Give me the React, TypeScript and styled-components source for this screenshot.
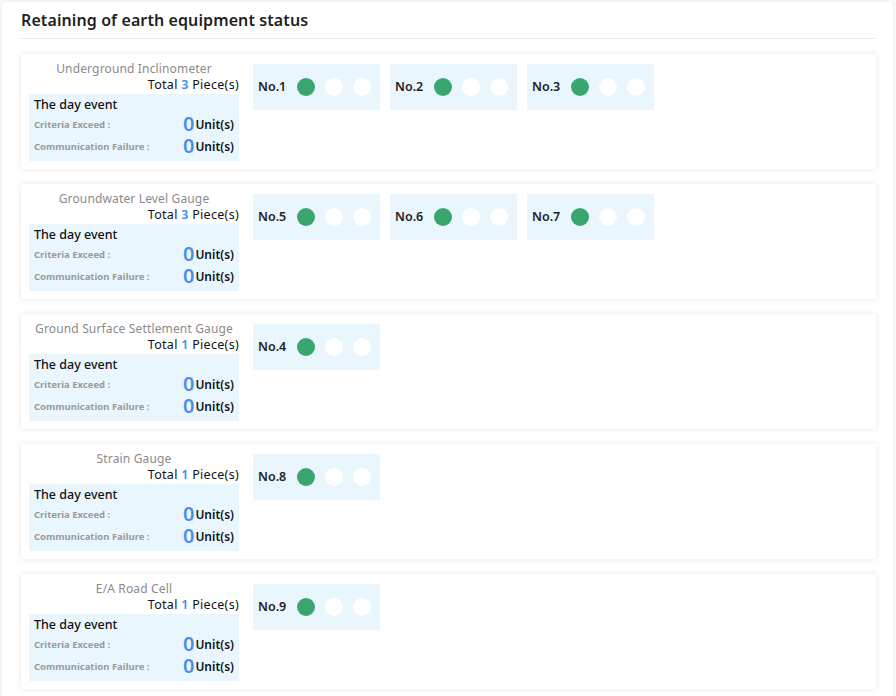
import React from 'react';
import styled, {createGlobalStyle} from 'styled-components';

type GroupType = {
    name: string
    total: number
    devices: number[]
}

const groups: GroupType[] = [
    {name: 'Underground Inclinometer', total: 3, devices: [1, 2, 3]},
    {name: 'Groundwater Level Gauge', total: 3, devices: [5, 6, 7]},
    {name: 'Ground Surface Settlement Gauge', total: 1, devices: [4]},
    {name: 'Strain Gauge', total: 1, devices: [8]},
    {name: 'E/A Road Cell', total: 1, devices: [9]},
]

const GlobalStyle = createGlobalStyle`
  body {
    margin: 0;
    background: #fafafa;
    font-family: "Noto Sans", "Open Sans", sans-serif;
    color: #222;
  }
`

export default function App() {
    return (
        <>
            <GlobalStyle/>
            <Panel>
                <Title>Retaining of earth equipment status</Title>
                <Cards>
                    {groups.map(g => <GroupCard key={g.name} group={g}/>)}
                </Cards>
            </Panel>
        </>
    )
}

const GroupCard = ({group}: { group: GroupType }) => {
    return (
        <Card>
            <Summary>
                <GroupName>{group.name}</GroupName>
                <Total>Total <Count>{group.total}</Count> Piece(s)</Total>
                <EventBox>
                    <EventTitle>The day event</EventTitle>
                    <EventRow>
                        <EventLabel>Criteria Exceed :</EventLabel>
                        <EventValue><Zero>0</Zero>Unit(s)</EventValue>
                    </EventRow>
                    <EventRow>
                        <EventLabel>Communication Failure :</EventLabel>
                        <EventValue><Zero>0</Zero>Unit(s)</EventValue>
                    </EventRow>
                </EventBox>
            </Summary>
            <Devices>
                {group.devices.map(n => (
                    <Device key={n}>
                        <DeviceName>No.{n}</DeviceName>
                        <Lamp on/>
                        <Lamp/>
                        <Lamp/>
                    </Device>
                ))}
            </Devices>
        </Card>
    )
}

//=========================PANEL===================================

const Panel = styled.div`
  margin: 2px 3px 0 2px;
  min-height: 720px;
  background: #fff;
  border-radius: 4px;
  box-shadow: 0 0 4px rgba(0, 0, 0, 0.08);
  padding: 8px 17px 20px 19px;
`

const Title = styled.div`
  font-size: 16px;
  font-weight: 600;
  letter-spacing: 0.1px;
  color: #1f1f1f;
  height: 28px;
  line-height: 20px;
  border-bottom: 1px solid #e8e8e8;
  margin-bottom: 15px;
`

const Cards = styled.div`
  display: flex;
  flex-direction: column;
  gap: 15px;
`

//=========================CARD====================================

const Card = styled.div`
  display: flex;
  align-items: flex-start;
  gap: 14px;
  height: 115px;
  box-sizing: border-box;
  padding: 6px 8px 8px 8px;
  background: #fff;
  box-shadow: 0 0 6px rgba(0, 0, 0, 0.1);
`

const Summary = styled.div`
  width: 210px;
  display: flex;
  flex-direction: column;
`

const GroupName = styled.div`
  text-align: center;
  color: #8a8a8a;
  font-size: 12px;
  letter-spacing: 0.15px;
  line-height: 17px;
`

const Total = styled.div`
  text-align: right;
  font-size: 12.5px;
  letter-spacing: 0.3px;
  line-height: 16px;
  color: #111;
  margin-bottom: 1px;
`

const Count = styled.span`
  color: #3a8ee6;
  font-weight: 600;
`

const EventBox = styled.div`
  background: #eaf6fe;
  padding: 2px 5px 2px 5px;
  height: 67px;
  box-sizing: border-box;
`

const EventTitle = styled.div`
  font-size: 12.5px;
  font-weight: 500;
  line-height: 17px;
  color: #111;
`

const EventRow = styled.div`
  display: flex;
  align-items: center;
  justify-content: space-between;
  height: 22px;
`

const EventLabel = styled.span`
  font-size: 9.5px;
  font-weight: 700;
  color: #9a9a9a;
`

const EventValue = styled.span`
  display: flex;
  align-items: center;
  gap: 1px;
  font-size: 12px;
  font-weight: 600;
  color: #111;
`

const Zero = styled.span`
  font-size: 20px;
  font-weight: 600;
  color: #4a8fe7;
  line-height: 20px;
`

//=========================DEVICES=================================

const Devices = styled.div`
  display: flex;
  gap: 10px;
  padding-top: 4px;
`

const Device = styled.div`
  width: 127px;
  height: 46px;
  box-sizing: border-box;
  padding: 0 5px;
  display: flex;
  align-items: center;
  gap: 10px;
  background: #e9f6fe;
`

const DeviceName = styled.span`
  font-size: 12.5px;
  font-weight: 600;
  color: #222;
  width: 29px;
  margin-top: -2px;
`

const Lamp = styled.span<{ on?: boolean }>`
  width: 18px;
  height: 18px;
  border-radius: 50%;
  background: ${props => props.on ? '#3aa56e' : '#ffffff'};
`
